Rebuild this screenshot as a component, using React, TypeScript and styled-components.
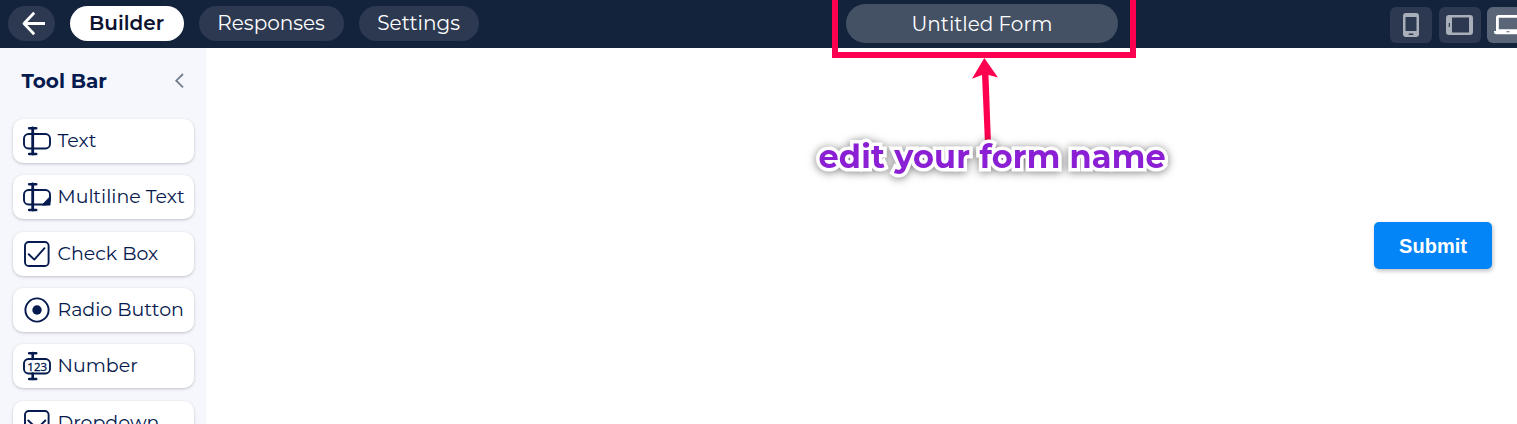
import React from "react";
import styled, { createGlobalStyle } from "styled-components";

const Global = createGlobalStyle`
  * { box-sizing: border-box; }
  html, body { margin: 0; height: 100%; overflow: hidden; background: #fff; }
  body { font-family: Montserrat, Inter, "Liberation Sans", sans-serif; }
  button { font-family: inherit; border: 0; padding: 0; margin: 0; cursor: pointer; }
`;

const Page = styled.div`
  position: relative;
  width: 1517px;
  height: 424px;
  overflow: hidden;
  display: flex;
  flex-direction: column;
`;

const Header = styled.header`
  flex: none;
  height: 48px;
  background: #14233c;
  display: flex;
  align-items: flex-start;
  padding: 6px 0 0 8px;
`;

const Nav = styled.nav`
  flex: none;
  display: flex;
  gap: 15px;
`;

const Pill = styled.button<{ $width: number; $active?: boolean }>`
  width: ${(p) => p.$width}px;
  height: 35px;
  border-radius: 18px;
  display: flex;
  align-items: center;
  justify-content: center;
  white-space: nowrap;
  font-size: 20px;
  line-height: 35px;
  font-weight: ${(p) => (p.$active ? 600 : 400)};
  color: ${(p) => (p.$active ? "#0c1230" : "#fff")};
  background: ${(p) => (p.$active ? "#fff" : "#2c3950")};
  && { padding-right: 0.8px; }
`;

const TitleField = styled.div`
  flex: none;
  width: 272px;
  height: 39px;
  margin: -2px 0 0 367px;
  border-radius: 20px;
  background: #445063;
  color: #fff;
  font-size: 20px;
  line-height: 40px;
  text-align: center;
`;

const Devices = styled.div`
  flex: none;
  display: flex;
  gap: 6.5px;
  margin: 1px 0 0 272px;
`;

const Device = styled.button<{ $active?: boolean }>`
  flex: none;
  width: 42px;
  height: 36px;
  border-radius: 6px;
  display: flex;
  align-items: center;
  justify-content: center;
  background: ${(p) => (p.$active ? "#5a6578" : "#2c3950")};
`;

const Body = styled.div`
  flex: 1;
  min-height: 0;
  display: flex;
`;

const Sidebar = styled.aside`
  width: 206px;
  background: #f6f7fc;
  padding: 0 12px 0 13px;
  overflow: hidden;
`;

const SidebarHead = styled.div`
  height: 71.2px;
  padding: 0 9px 5.2px 8.5px;
  display: flex;
  align-items: center;
  justify-content: space-between;
`;

const SidebarTitle = styled.h2`
  margin: 0;
  font-size: 20px;
  font-weight: 700;
  color: #051a4e;
`;

const ToolList = styled.div`
  display: flex;
  flex-direction: column;
  gap: 12.3px;
`;

const Tool = styled.div`
  flex: none;
  height: 44px;
  border-radius: 10px;
  background: #fff;
  box-shadow: 0 1px 3px rgba(40, 40, 60, 0.25);
  display: flex;
  align-items: center;
  gap: 5.5px;
  padding-left: 9px;
  color: #051a4e;
`;

const ToolLabel = styled.span`
  font-size: 19px;
  line-height: 23px;
  padding-bottom: 1.2px;
  white-space: nowrap;
`;

const Canvas = styled.main`
  flex: 1;
  display: flex;
  justify-content: flex-end;
  align-items: flex-start;
  padding: 174px 25px 0 0;
`;

const Submit = styled.button`
  width: 118px;
  height: 47px;
  border-radius: 5px;
  background: #0384f7;
  color: #fff;
  && { font-family: "Liberation Sans", Arial, sans-serif; padding-top: 1px; }
  font-size: 20px;
  font-weight: 700;
  box-shadow: 1px 2px 4px rgba(0, 0, 0, 0.25);
`;

const Highlight = styled.div`
  position: absolute;
  left: 832px;
  top: -10px;
  width: 304.4px;
  height: 68px;
  border: 6px solid #ff0050;
`;

const Arrow = styled.svg`
  position: absolute;
  left: 960px;
  top: 54px;
`;

const Callout = styled.div`
  position: absolute;
  left: 818.5px;
  top: 137px;
  font-size: 32px;
  line-height: 40px;
  font-weight: 700;
  letter-spacing: 0.15px;
  white-space: nowrap;
  color: #8a1fd4;
  -webkit-text-stroke: 7px #fff;
  paint-order: stroke fill;
  stroke-linejoin: round;
  filter: drop-shadow(0 1px 4px rgba(0, 0, 0, 0.5));
`;

type Kind = "text" | "multiline" | "check" | "radio" | "number" | "dropdown";

const ToolIcon = ({ kind }: { kind: Kind }) => (
  <svg width="30" height="30" viewBox="0 0 30 30" fill="none" stroke="currentColor" strokeWidth="1.9" strokeLinecap="round" strokeLinejoin="round">
    {(kind === "text" || kind === "multiline") && (
      <>
        <rect x="2" y="8" width="26" height="14.5" rx="4.5" />
        <path d="M7.2 2.2h7M7.2 28h7" strokeWidth="2.6" />
        <path d="M10.7 2v26" strokeWidth="2.8" />
      </>
    )}
    {kind === "multiline" && <path d="M28 15v8h-7.5z" fill="currentColor" strokeWidth="1" />}
    {kind === "number" && (
      <>
        <rect x="2" y="8" width="26" height="14.5" rx="4.5" />
        <path d="M7.2 2.2h7M7.2 28h7" strokeWidth="2.6" />
        <path d="M10.7 2v6M10.7 22.5v5.5" strokeWidth="2.6" />
        <text x="15.2" y="19.5" textAnchor="middle" fontSize="11.5" fontFamily="Noto Sans, sans-serif" fontWeight="400" fill="currentColor" stroke="currentColor" strokeWidth="0.3">123</text>
      </>
    )}
    {(kind === "check" || kind === "dropdown") && (
      <>
        <rect x="3" y="3" width="23.6" height="24" rx="3.8" />
        <path d={kind === "check" ? "M6.7 15.2l5.6 5.4L22.5 9.2" : "M6.3 12.5l8.7 8.2 8.3-8.2"} />
      </>
    )}
    {kind === "radio" && (
      <>
        <circle cx="15" cy="15" r="11.6" />
        <circle cx="15" cy="15" r="4.7" fill="currentColor" stroke="none" />
      </>
    )}
  </svg>
);

const tools: { kind: Kind; label: string }[] = [
  { kind: "text", label: "Text" },
  { kind: "multiline", label: "Multiline Text" },
  { kind: "check", label: "Check Box" },
  { kind: "radio", label: "Radio Button" },
  { kind: "number", label: "Number" },
  { kind: "dropdown", label: "Dropdown" },
];

export default function App() {
  return (
    <Page>
      <Global />
      <Header>
        <Nav>
          <Pill $width={47} aria-label="Back">
            <svg width="28" height="26" viewBox="0 0 28 26" fill="none" stroke="#fff" strokeWidth="2.8" strokeLinejoin="round">
              <path d="M17.200 1.800L7 12.500l10.200 10.700M7 12.500h21" />
            </svg>
          </Pill>
          <Pill $width={114} $active>Builder</Pill>
          <Pill $width={145}>Responses</Pill>
          <Pill $width={120}>Settings</Pill>
        </Nav>
        <TitleField>Untitled Form</TitleField>
        <Devices>
          <Device aria-label="Phone">
            <svg width="16" height="24" viewBox="0 0 16 24">
              <path fillRule="evenodd" fill="#a9afb9" d="M3 0h10a3 3 0 0 1 3 3v18a3 3 0 0 1-3 3H3a3 3 0 0 1-3-3V3a3 3 0 0 1 3-3zM2.5 4v14h11V4zM5.7 20.5v1.4h4.6v-1.4z" />
            </svg>
          </Device>
          <Device aria-label="Tablet">
            <svg width="27" height="20" viewBox="0 0 27 20">
              <path fillRule="evenodd" fill="#a9afb9" d="M3 0h21a3 3 0 0 1 3 3v14a3 3 0 0 1-3 3H3a3 3 0 0 1-3-3V3a3 3 0 0 1 3-3zM6 2.5v15h17v-15zM2.7 8v4h1.2V8z" />
            </svg>
          </Device>
          <Device $active aria-label="Laptop">
            <svg width="28" height="20" viewBox="0 0 28 20">
              <path fillRule="evenodd" fill="#fff" d="M4.5 0h19A2.5 2.5 0 0 1 26 2.5V16h2v1a2.3 2.3 0 0 1-2.3 2.3H2.3A2.3 2.3 0 0 1 0 17v-1h2V2.5A2.5 2.5 0 0 1 4.5 0zM4.8 2.7v11.5h18.4V2.7zM12.5 16.3v1h3v-1z" />
            </svg>
          </Device>
        </Devices>
      </Header>
      <Body>
        <Sidebar>
          <SidebarHead>
            <SidebarTitle>Tool Bar</SidebarTitle>
            <svg width="11" height="18" viewBox="0 0 11 18" fill="none" stroke="#75818f" strokeWidth="1.9">
              <path d="M9 2L2.3 8.7 9 15.4" />
            </svg>
          </SidebarHead>
          <ToolList>
            {tools.map((t) => (
              <Tool key={t.kind}>
                <ToolIcon kind={t.kind} />
                <ToolLabel>{t.label}</ToolLabel>
              </Tool>
            ))}
          </ToolList>
        </Sidebar>
        <Canvas>
          <Submit>Submit</Submit>
        </Canvas>
      </Body>
      <Highlight />
      <Arrow width="50" height="96" viewBox="0 0 50 96">
        <path fill="#ff0050" d="M24.3 4L38 23.5l-9.5-2.5L31 90h-6l-3-69-10 3.7z" />
      </Arrow>
      <Callout>edit your form name</Callout>
    </Page>
  );
}
